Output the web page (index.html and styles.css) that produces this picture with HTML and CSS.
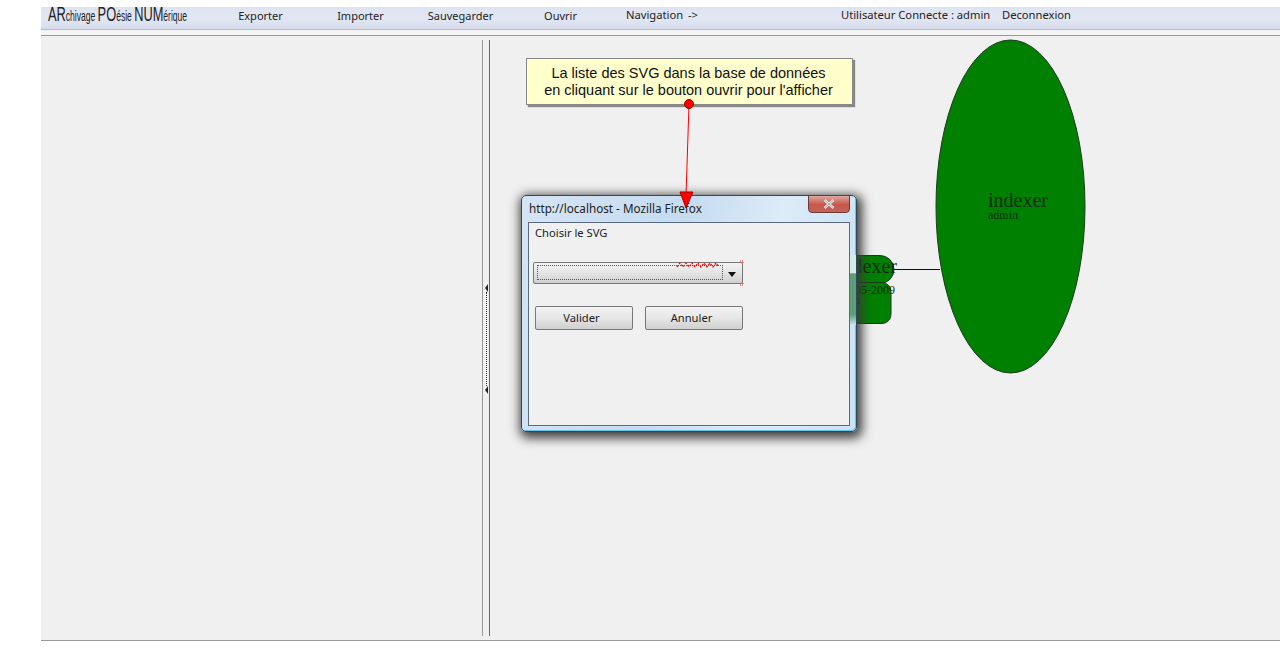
FILE: index.html

```html
<!DOCTYPE html>
<html lang="fr">

<head>
    <meta charset="UTF-8">
    <meta name="viewport" content="width=device-width, initial-scale=1.0">
    <title>ARchivage POésie NUMérique</title>
    <link rel="stylesheet" href="styles.css">
</head>

<body>
    <div class="app">
        <div class="menubar">
            <div class="logo"><b>AR</b>chivage <b>PO</b>ésie <b>NUM</b>érique</div>
            <a class="menuItem">Exporter</a>
            <a class="menuItem">Importer</a>
            <a class="menuItem">Sauvegarder</a>
            <a class="menuItem">Ouvrir</a>
            <a class="navLink">Navigation -&gt;</a>
            <span class="user">Utilisateur Connecte : admin</span>
            <a class="logout">Deconnexion</a>
        </div>
        <div class="menuGap"></div>

        <div class="workspace">
            <div class="leftPanel"></div>
            <div class="splitter">
                <span class="grip">
                    <i class="gripArrow"></i>
                    <i class="gripDots"></i>
                    <i class="gripArrow"></i>
                </span>
            </div>

            <div class="canvas">
                <!-- schema -->
                <svg class="layer" width="790" height="604">
                    <line x1="400" y1="233.5" x2="450" y2="233.5" stroke="#111" />
                    <rect x="300" y="219.5" width="104" height="28" rx="14" class="node" />
                    <rect x="300" y="246.5" width="101" height="41" rx="9" class="node" />
                    <text x="347" y="237" class="nodeTitle">indexer</text>
                    <text x="349" y="258" class="nodeSub">05-05-2009</text>
                    <text x="340" y="268" class="nodeSub">admin</text>
                    <ellipse cx="520.5" cy="170.5" rx="74.5" ry="166.5" class="node" />
                    <text x="498" y="171" class="nodeTitle">indexer</text>
                    <text x="498" y="183" class="nodeSub">admin</text>
                </svg>

                <div class="note">La liste des SVG dans la base de données<br>en cliquant sur le bouton ouvrir pour l'afficher</div>

                <div class="popup">
                    <div class="popupTitle">
                        <span>http://localhost - Mozilla Firefox</span>
                        <div class="closeBtn">
                            <svg width="12" height="10" viewBox="0 0 12 10">
                                <path d="M1.5 1 L10.5 9 M10.5 1 L1.5 9" stroke="#eee" stroke-width="2.4" />
                                <path d="M1.5 1 L10.5 9 M10.5 1 L1.5 9" stroke="#777" stroke-width=".6" />
                            </svg>
                        </div>
                    </div>
                    <div class="popupBody">
                        <div class="chooseLabel">Choisir le SVG</div>
                        <div class="combo">
                            <div class="comboFocus"></div>
                            <div class="comboArrow"></div>
                            <svg class="comboMarks" width="214" height="26">
                                <path d="M145 7 l3 -4 l3 4 l3 -4 l3 4 l3 -4 l3 4 l3 -4 l3 4 l3 -4 l3 4 l3 -4 l3 4 l3 -4 l3 4" fill="none" stroke="#f00" stroke-width="1.3" stroke-dasharray="2 1.5" />
                                <path d="M208 1 h3 v3 M208 25 h3 v-3" fill="none" stroke="#e01818" stroke-dasharray="1 1" />
                            </svg>
                        </div>
                        <div class="buttons">
                            <button class="btn">Valider</button>
                            <button class="btn">Annuler</button>
                        </div>
                    </div>
                    <div class="glass"></div>
                </div>

                <!-- fleche au dessus de la fenetre -->
                <svg class="layer" width="790" height="604">
                    <line x1="199" y1="68" x2="196" y2="160" stroke="#f00" />
                    <circle cx="199" cy="68" r="4.5" fill="#f00" stroke="#900" />
                    <polygon points="190,156 203,156 196,172" fill="#f00" stroke="#a00" />
                </svg>
            </div>
        </div>
    </div>
</body>

</html>
```

FILE: styles.css

```css
* {
    margin: 0;
    padding: 0;
    box-sizing: border-box;
}

html,
body {
    height: 100%;
    background: #fff;
    overflow: hidden;
}

body {
    font-family: "Noto Sans", "Open Sans", sans-serif;
    font-size: 11.2px;
    color: #222;
}

.app {
    margin-left: 41px;
    padding-top: 7px;
    height: 641px;
    display: flex;
    flex-direction: column;
}

.menubar {
    height: 23px;
    flex: none;
    display: flex;
    align-items: center;
    padding: 0 0 6px 7px;
    background: linear-gradient(#dde3f1, #e3e7f3 50%, #d6dcec);
    border-bottom: 1px solid #bbb;
}

.logo {
    width: 162px;
    font-family: "Liberation Sans Narrow", "Liberation Sans", sans-serif;
    font-size: 14px;
    line-height: 18px;
    color: #222;
    white-space: nowrap;
    transform: scaleX(.61);
    transform-origin: left center;
}

.logo b {
    font-weight: normal;
    font-size: 21px;
}

.menuItem {
    width: 100px;
    text-align: center;
    font-size: 11px;
    padding-left: 1px;
}

.navLink {
    margin-left: 16px;
    width: 215px;
    margin-top: -2px;
    word-spacing: 2px;
}

.user {
    width: 161px;
    margin-top: -2px;
    white-space: nowrap;
}

.logout {
    margin-top: -2px;
}

.menuGap {
    height: 6px;
    flex: none;
    border-bottom: 1px solid #999;
    background: #f4f4f4;
}

.workspace {
    flex: 1;
    display: flex;
    background: #f0f0f0;
    border-bottom: 1px solid #999;
}

.leftPanel {
    width: 441px;
}

.splitter {
    width: 8px;
    margin: 4px 0;
    border-left: 1px solid #999;
    border-right: 1px solid #666;
    display: flex;
    align-items: center;
    justify-content: center;
}

.grip {
    display: flex;
    flex-direction: column;
    align-items: center;
    height: 114px;
    margin-top: 1px;
    padding: 2px 0;
    background: #f6f6f6;
}

.gripArrow {
    flex: none;
    width: 0;
    height: 0;
    border-top: 4px solid transparent;
    border-bottom: 4px solid transparent;
    border-right: 3px solid #223;
}

.gripDots {
    flex: 1;
    border-left: 1px dotted #222;
}

.canvas {
    flex: 1;
    position: relative;
}

.layer {
    position: absolute;
    left: 0;
    top: 0;
}

.node {
    fill: #008000;
    stroke: #1c3a1c;
}

.nodeTitle {
    font-family: "Liberation Serif", serif;
    font-size: 20px;
    fill: #0c2c0c;
}

.nodeSub {
    font-family: "Liberation Serif", serif;
    font-size: 12px;
    fill: #0c2c0c;
}

.note {
    position: absolute;
    left: 36px;
    top: 22px;
    width: 327px;
    height: 47px;
    padding: 6px 2px 0 0;
    text-align: center;
    font-family: "Liberation Sans", sans-serif;
    font-size: 14.5px;
    line-height: 17px;
    color: #111;
    background: #ffffcc;
    border: 1px solid #888;
    box-shadow: 2px 2px 1px #888;
}

.popup {
    position: absolute;
    left: 31px;
    top: 159px;
    width: 336px;
    height: 237px;
    padding: 0 6px 5px 6px;
    display: flex;
    flex-direction: column;
    background: linear-gradient(100deg, #d4e4f4, #c5dcf0 45%, #dcebf8 70%, #c8e2f5);
    border: 1px solid #2b4a5a;
    border-radius: 5px;
    box-shadow: 2px 3px 11px 3px #3a3a3a, inset -1px -1px 0 #6cc0ea;
}

.popupTitle {
    height: 26px;
    flex: none;
    position: relative;
    padding: 4px 0 0 1px;
    font-size: 11.7px;
    color: #222;
}

.closeBtn {
    position: absolute;
    right: 0;
    top: -1px;
    width: 42px;
    height: 18px;
    display: flex;
    align-items: center;
    justify-content: center;
    background: linear-gradient(#dca8a0, #c9554a 55%, #c0665c);
    border: 1px solid #6b3a36;
    border-radius: 0 0 4px 4px;
}

.popupBody {
    flex: 1;
    padding: 2px 6px;
    background: #f0f0f0;
    border: 1px solid #5b6a80;
}

.chooseLabel {
    font-size: 11.2px;
    line-height: 16px;
}

.combo {
    position: relative;
    width: 210px;
    height: 22px;
    margin: 21px 0 0 -2px;
    background: linear-gradient(#f2f2f2, #e6e6e6 45%, #cfcfcf);
    border: 1px solid #777;
    border-radius: 2px;
}

.comboFocus {
    position: absolute;
    left: 3px;
    top: 2px;
    width: 186px;
    height: 15px;
    border: 1px dotted #555;
}

.comboArrow {
    position: absolute;
    right: 6px;
    top: 9px;
    border-left: 4px solid transparent;
    border-right: 4px solid transparent;
    border-top: 5px solid #111;
}

.comboMarks {
    position: absolute;
    left: -2px;
    top: -3px;
}

.buttons {
    display: flex;
    gap: 12px;
    margin-top: 22px;
}

.btn {
    width: 98px;
    height: 24px;
    padding: 0 5px 2px 0;
    font-family: inherit;
    font-size: 11.2px;
    color: #222;
    background: linear-gradient(#f3f3f3, #e8e8e8 45%, #d0d0d0);
    border: 1px solid #777;
    border-radius: 2px;
}

.glass {
    position: absolute;
    right: 0;
    top: 59px;
    width: 6px;
    height: 70px;
    background: linear-gradient(#d4ebe6, #d4ebe6 25%, #5e9c7c 27%, #5e9c7c 85%, #c8e2f5);
}
```
